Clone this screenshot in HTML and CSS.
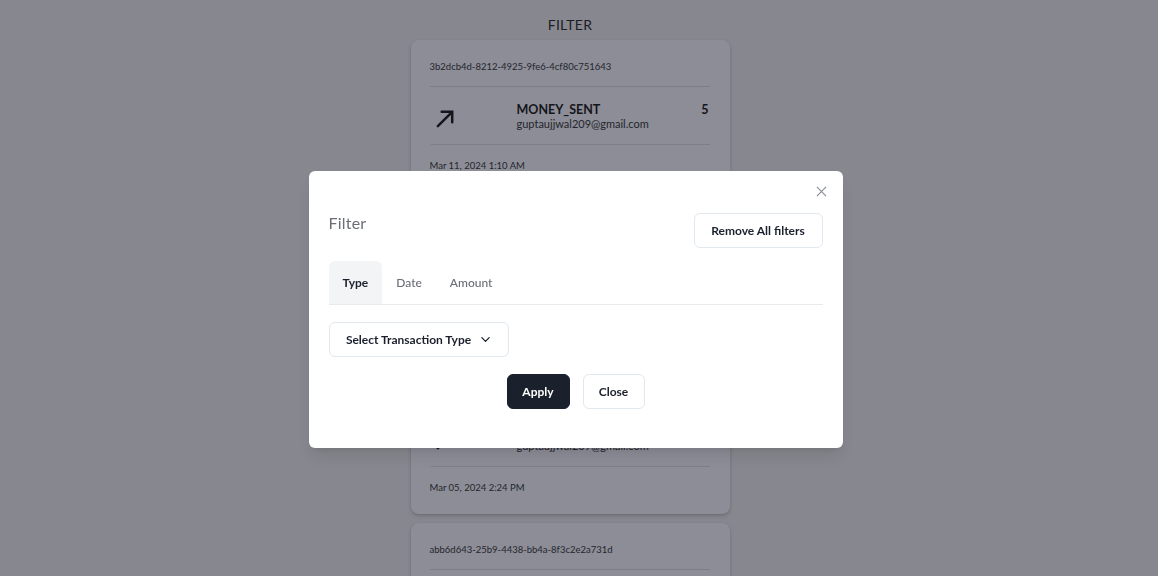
FILE: index.html
```html
<!DOCTYPE html>
<html>
<head>
<meta charset="utf-8">
<link rel="stylesheet" href="styles.css">
</head>
<body>
<div class="page">
  <h1 class="title">FILTER</h1>
  <div class="list">
    <div class="card">
      <div class="txid">3b2dcb4d-8212-4925-9fe6-4cf80c751643</div>
      <div class="row">
        <svg class="arrow" viewBox="0 0 24 24" width="23" height="23"><path d="M4 20 L19 5 M8 5 H19 V16" fill="none" stroke="#15161b" stroke-width="2.6" stroke-linecap="round"/></svg>
        <div class="info"><div class="kind">MONEY_SENT</div><div class="email">guptaujjwal209@gmail.com</div></div>
        <div class="amt">5</div>
      </div>
      <div class="date">Mar 11, 2024 1:10 AM</div>
    </div>
    <div class="card">
      <div class="txid">7c1e2a90-4b3d-4f21-8a6e-2d5f9b0c3e71</div>
      <div class="row">
        <svg class="arrow" viewBox="0 0 24 24" width="23" height="23"><path d="M4 20 L19 5 M8 5 H19 V16" fill="none" stroke="#15161b" stroke-width="2.6" stroke-linecap="round"/></svg>
        <div class="info"><div class="kind">MONEY_SENT</div><div class="email">guptaujjwal209@gmail.com</div></div>
        <div class="amt">5</div>
      </div>
      <div class="date">Mar 08, 2024 6:42 PM</div>
    </div>
    <div class="card">
      <div class="txid">5e9f0b12-6c7a-4d85-b3e1-9a0c4f7d2b68</div>
      <div class="row">
        <svg class="arrow" viewBox="0 0 24 24" width="23" height="23"><path d="M4 20 L19 5 M8 5 H19 V16" fill="none" stroke="#15161b" stroke-width="2.6" stroke-linecap="round"/></svg>
        <div class="info"><div class="kind">MONEY_SENT</div><div class="email">guptaujjwal209@gmail.com</div></div>
        <div class="amt">5</div>
      </div>
      <div class="date">Mar 05, 2024 2:24 PM</div>
    </div>
    <div class="card">
      <div class="txid">abb6d643-25b9-4438-bb4a-8f3c2e2a731d</div>
      <div class="row">
        <svg class="arrow" viewBox="0 0 24 24" width="23" height="23"><path d="M4 20 L19 5 M8 5 H19 V16" fill="none" stroke="#15161b" stroke-width="2.6" stroke-linecap="round"/></svg>
        <div class="info"><div class="kind">MONEY_SENT</div><div class="email">guptaujjwal209@gmail.com</div></div>
        <div class="amt">5</div>
      </div>
      <div class="date">Mar 01, 2024 9:15 AM</div>
    </div>
  </div>
</div>

<div class="overlay">
  <div class="modal">
    <button class="x" aria-label="Close">
      <svg viewBox="0 0 12 12" width="11" height="11"><path d="M1 1 L11 11 M11 1 L1 11" stroke="#8a8f98" stroke-width="1.3" fill="none"/></svg>
    </button>
    <div class="mhead">
      <div class="mtitle">Filter</div>
      <button class="btn outline">Remove All filters</button>
    </div>
    <div class="tabs">
      <div class="tab active">Type</div>
      <div class="tab">Date</div>
      <div class="tab">Amount</div>
    </div>
    <div class="panel">
      <button class="btn outline select"><span>Select Transaction Type</span>
        <svg viewBox="0 0 12 12" width="11" height="11"><path d="M2 4 L6 8 L10 4" stroke="#1a202c" stroke-width="1.4" fill="none" stroke-linecap="round" stroke-linejoin="round"/></svg>
      </button>
    </div>
    <div class="mfoot">
      <button class="btn dark">Apply</button>
      <button class="btn outline">Close</button>
    </div>
  </div>
</div>
</body>
</html>
```
FILE: styles.css
```css
* { box-sizing: border-box; }
html, body { margin: 0; padding: 0; }
body {
  width: 1158px;
  height: 576px;
  overflow: hidden;
  background: #87878f;
  font-family: Lato, "Noto Sans", sans-serif;
  color: #15161b;
}
.page {
  display: flex;
  flex-direction: column;
  align-items: center;
  padding-right: 18px;
}
.title {
  margin: 15px 0 0;
  height: 25px;
  font-size: 14px;
  font-weight: 400;
  line-height: 20px;
  color: #1c1d24;
  letter-spacing: 0.3px;
}
.list {
  display: flex;
  flex-direction: column;
  gap: 9px;
}
.card {
  width: 319px;
  height: 152px;
  background: #8c8d96;
  border-radius: 8px;
  box-shadow: 0 2px 4px rgba(0,0,0,0.14), 0 1px 2px rgba(0,0,0,0.08);
  padding: 20px 20px 0 20px;
}
.txid {
  font-size: 9.5px;
  line-height: 13px;
  color: #25262d;
  margin-left: -1px;
  padding-bottom: 13px;
  border-bottom: 1px solid #7d7e87;
}
.row {
  display: grid;
  grid-template-columns: 86px 1fr auto;
  align-items: start;
  padding: 15px 0 13px;
  border-bottom: 1px solid #7d7e87;
}
.arrow { margin: 5px 0 0 3px; display: block; }
.kind { font-size: 12.5px; font-weight: 700; line-height: 15px; color: #15161b; }
.email { font-size: 11px; line-height: 14px; color: #24252c; }
.amt { font-size: 12.5px; font-weight: 700; line-height: 15px; padding-right: 1px; }
.date {
  font-size: 9.5px;
  color: #25262d;
  margin-left: -1px;
  padding-top: 15px;
}

.overlay {
  position: fixed;
  inset: 0;
  display: flex;
  justify-content: center;
  align-items: flex-start;
  padding-right: 7px;
}
.modal {
  position: relative;
  margin-top: 171px;
  width: 534px;
  height: 277px;
  background: #ffffff;
  border-radius: 6px;
  padding: 42px 20px 0 20px;
  box-shadow: 0 10px 15px -3px rgba(0,0,0,0.1), 0 4px 6px -2px rgba(0,0,0,0.05);
}
.x {
  position: absolute;
  top: 9px;
  right: 10px;
  width: 22px;
  height: 22px;
  border: 0;
  background: transparent;
  padding: 0;
  display: flex;
  align-items: center;
  justify-content: center;
  cursor: pointer;
}
.mhead {
  display: flex;
  justify-content: space-between;
  align-items: center;
}
.mtitle {
  font-size: 16px;
  color: #6b6e75;
  letter-spacing: 0.2px;
  margin-top: -16px;
}
.btn {
  font-family: inherit;
  font-size: 12px;
  font-weight: 700;
  height: 35px;
  padding: 0 15px;
  border-radius: 6px;
  cursor: pointer;
  display: inline-flex;
  align-items: center;
  justify-content: center;
  gap: 9px;
}
.outline {
  background: #fff;
  color: #1a202c;
  border: 1px solid #e2e8f0;
}
.dark {
  background: #1a202c;
  color: #ffffff;
  border: 1px solid #1a202c;
}
.mhead .btn { width: 129px; }
.tabs {
  display: flex;
  margin-top: 13px;
  border-bottom: 1px solid #e8eaee;
}
.tab {
  height: 43px;
  display: flex;
  align-items: center;
  padding: 0 14px;
  font-size: 12px;
  font-weight: 500;
  color: #6b6e75;
  border-radius: 6px 6px 0 0;
}
.tab.active {
  background: #f3f4f6;
  color: #1a202c;
  font-weight: 700;
}
.panel { padding-top: 17px; }
.select { width: 180px; height: 35px; }
.mfoot {
  display: flex;
  justify-content: center;
  gap: 13px;
  margin-top: 17px;
}
.mfoot .btn { height: 35px; width: 63px; padding: 0; }
.mfoot .outline { width: 62px; }
```
